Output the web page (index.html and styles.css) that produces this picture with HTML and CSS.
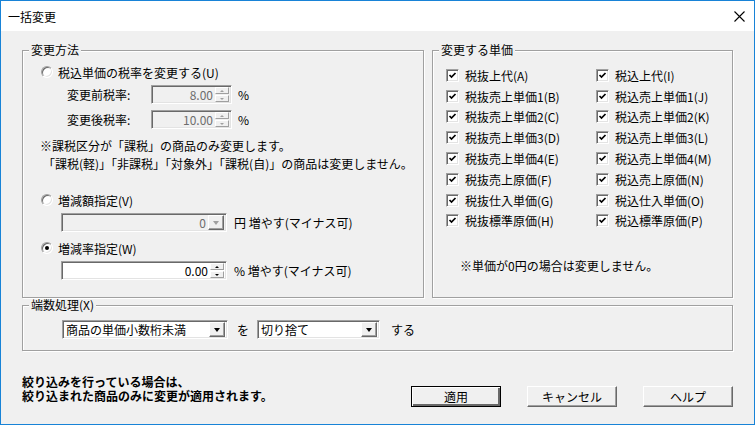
FILE: index.html
```html
<!DOCTYPE html>
<html lang="ja">
<head>
  <meta charset="UTF-8" />
  <title>一括変更</title>
  <link rel="stylesheet" href="styles.css">
</head>
<body>
  <div class="window">
    <div class="titlebar">
      <span class="title">一括変更</span>
      <svg class="close" width="11" height="11" viewBox="0 0 11 11">
        <path d="M0.5 0.5 L10.5 10.5 M10.5 0.5 L0.5 10.5" stroke="#000" stroke-width="1.1" fill="none"/>
      </svg>
    </div>

    <div class="client">
      <div class="top">
        <fieldset class="group method">
          <legend>変更方法</legend>
          <div class="gbody">
            <div class="opt first"><span class="radio"></span>税込単価の税率を変更する(U)</div>
            <div class="rate-row">
              <span class="rate-label">変更前税率:</span>
              <span class="spin off"><span class="val">8.00</span><span class="spin-btns"><span class="up"></span><span class="down"></span></span></span>
              <span class="unit">%</span>
            </div>
            <div class="rate-row second">
              <span class="rate-label">変更後税率:</span>
              <span class="spin off"><span class="val">10.00</span><span class="spin-btns"><span class="up"></span><span class="down"></span></span></span>
              <span class="unit">%</span>
            </div>
            <div class="note">
              <div>※課税区分が「課税」の商品のみ変更します。</div>
              <div class="indent">「課税(軽)」「非課税」「対象外」「課税(自)」の商品は変更しません。</div>
            </div>
            <div class="opt gap-big"><span class="radio"></span>増減額指定(V)</div>
            <div class="field-row">
              <span class="combo off wide"><span class="val right">0</span><span class="drop"><i></i></span></span>
              <span class="suffix">円 増やす(マイナス可)</span>
            </div>
            <div class="opt second"><span class="radio on"></span>増減率指定(W)</div>
            <div class="field-row">
              <span class="spin wide"><span class="val">0.00</span><span class="spin-btns"><span class="up"></span><span class="down"></span></span></span>
              <span class="suffix">% 増やす(マイナス可)</span>
            </div>
          </div>
        </fieldset>

        <fieldset class="group prices">
          <legend>変更する単価</legend>
          <div class="gbody">
            <div class="checks">
              <label class="chk"><span class="box"></span>税抜上代(A)</label>
              <label class="chk"><span class="box"></span>税込上代(I)</label>
              <label class="chk"><span class="box"></span>税抜売上単価1(B)</label>
              <label class="chk"><span class="box"></span>税込売上単価1(J)</label>
              <label class="chk"><span class="box"></span>税抜売上単価2(C)</label>
              <label class="chk"><span class="box"></span>税込売上単価2(K)</label>
              <label class="chk"><span class="box"></span>税抜売上単価3(D)</label>
              <label class="chk"><span class="box"></span>税込売上単価3(L)</label>
              <label class="chk"><span class="box"></span>税抜売上単価4(E)</label>
              <label class="chk"><span class="box"></span>税込売上単価4(M)</label>
              <label class="chk"><span class="box"></span>税抜売上原価(F)</label>
              <label class="chk"><span class="box"></span>税込売上原価(N)</label>
              <label class="chk"><span class="box"></span>税抜仕入単価(G)</label>
              <label class="chk"><span class="box"></span>税込仕入単価(O)</label>
              <label class="chk"><span class="box"></span>税抜標準原価(H)</label>
              <label class="chk"><span class="box"></span>税込標準原価(P)</label>
            </div>
            <div class="price-note">※単価が0円の場合は変更しません。</div>
          </div>
        </fieldset>
      </div>

      <fieldset class="group rounding">
        <legend>端数処理(X)</legend>
        <div class="round-row">
          <span class="combo c1"><span class="val">商品の単価小数桁未満</span><span class="drop"><i></i></span></span>
          <span class="word wo">を</span>
          <span class="combo c2"><span class="val">切り捨て</span><span class="drop"><i></i></span></span>
          <span class="word suru">する</span>
        </div>
      </fieldset>

      <div class="bottom">
        <p class="warn">絞り込みを行っている場合は、<br>絞り込まれた商品のみに変更が適用されます。</p>
        <div class="buttons">
          <button class="btn default">適用</button>
          <button class="btn">キャンセル</button>
          <button class="btn">ヘルプ</button>
        </div>
      </div>
    </div>
  </div>
</body>
</html>
```

FILE: styles.css
```css
* { box-sizing: border-box; }

body {
  margin: 0;
  font-family: "Noto Sans CJK JP", "Noto Sans", sans-serif;
  font-size: 12px;
  color: #000;
}

.window {
  width: 755px;
  height: 425px;
  border: 1px solid #1883d7;
  background: #f0f0f0;
  display: flex;
  flex-direction: column;
}

.titlebar {
  height: 30px;
  flex-shrink: 0;
  background: #fff;
  display: flex;
  align-items: center;
  justify-content: space-between;
  padding: 0 9px 0 7px;
}
.title { font-size: 12px; }

.client {
  flex: 1;
  padding: 12px 21px 0 21px;
}

.top { display: flex; gap: 8px; }

/* group boxes */
fieldset.group {
  margin: 0;
  padding: 0;
  min-width: 0;
  border: 1px solid #a0a0a0;
  box-shadow: inset 1px 1px 0 #fff, 1px 1px 0 #fff;
}
fieldset.group legend {
  margin-left: 6px;
  padding: 0 2px;
  height: 14px;
  line-height: 14px;
  background: #f0f0f0;
}

.method { width: 402px; height: 255px; }
.prices { width: 301px; height: 255px; }
.method .gbody { padding-left: 18px; }
.prices .gbody { padding-left: 13px; }

/* radio rows */
.opt {
  height: 20px;
  display: flex;
  align-items: center;
}
.opt.first { margin-top: 5px; }
.opt.second { margin-top: 6px; }
.opt.gap-big { margin-top: 17px; }

.radio {
  width: 12px;
  height: 12px;
  border-radius: 50%;
  background: #fff;
  border: 1px solid;
  border-color: #a0a0a0 #fff #fff #a0a0a0;
  box-shadow: inset 1px 1px 0 #696969, inset -1px -1px 0 #e3e3e3;
  margin-right: 5px;
  display: flex;
  align-items: center;
  justify-content: center;
}
.radio.on::after {
  content: "";
  width: 4px;
  height: 4px;
  border-radius: 50%;
  background: #000;
}

/* sunken edit boxes */
.spin, .combo {
  height: 19px;
  display: flex;
  align-items: center;
  background: #fff;
  border: 1px solid;
  border-color: #a0a0a0 #fff #fff #a0a0a0;
  box-shadow: inset 1px 1px 0 #696969, inset -1px -1px 0 #e3e3e3;
  padding: 2px 2px 2px 3px;
}
.spin.off, .combo.off { background: #f0f0f0; color: #6d6d6d; }

.val { flex: 1; line-height: 14px; white-space: nowrap; }
.spin .val, .val.right { text-align: right; padding-right: 2px; }

.spin-btns {
  width: 14px;
  height: 15px;
  display: flex;
  flex-direction: column;
  gap: 1px;
}
.spin-btns span {
  flex: 1;
  background: #f0f0f0;
  border: 1px solid;
  border-color: #fff #a0a0a0 #a0a0a0 #fff;
  display: flex;
  align-items: center;
  justify-content: center;
}
.spin-btns .up::after, .spin-btns .down::after {
  content: "";
  border-left: 2px solid transparent;
  border-right: 2px solid transparent;
}
.spin-btns .up::after { border-bottom: 2px solid #000; }
.spin-btns .down::after { border-top: 2px solid #000; }
.spin.off .spin-btns .up::after { border-bottom-color: #a0a0a0; }
.spin.off .spin-btns .down::after { border-top-color: #a0a0a0; }

.drop {
  width: 16px;
  height: 15px;
  background: #f0f0f0;
  border: 1px solid;
  border-color: #fff #696969 #696969 #fff;
  box-shadow: inset -1px -1px 0 #a0a0a0;
  display: flex;
  align-items: center;
  justify-content: center;
}
.drop i {
  border-left: 3.5px solid transparent;
  border-right: 3.5px solid transparent;
  border-top: 4px solid #000;
}
.combo.off .drop i { border-top-color: #a0a0a0; }

.rate-row {
  height: 19px;
  margin-top: 3px;
  display: flex;
  align-items: center;
}
.rate-row.second { margin-top: 6px; }
.rate-label { width: 84px; margin-left: 26px; }
.rate-row .spin { width: 81px; }
.unit { margin-left: 6px; }

.note {
  margin-top: 8px;
  margin-left: -1px;
  line-height: 18px;
}
.note .indent { padding-left: 3px; }

.field-row {
  height: 19px;
  margin-top: 3px;
  margin-left: 20px;
  display: flex;
  align-items: center;
}
.spin.wide, .combo.wide { width: 166px; }
.suffix { margin-left: 7px; }

/* check list */
.checks {
  margin-top: 8px;
  display: grid;
  grid-template-columns: 150px 130px;
  grid-auto-rows: 20.8px;
}
.chk { display: flex; align-items: center; }
.box {
  width: 13px;
  height: 13px;
  margin-right: 6px;
  background: #fff url("data:image/svg+xml,%3Csvg xmlns='http://www.w3.org/2000/svg' width='9' height='9'%3E%3Cpath d='M1.5 4 L3.5 6 L7.5 2' stroke='%23000' stroke-width='1.7' fill='none'/%3E%3C/svg%3E") center / 9px 9px no-repeat;
  border: 1px solid;
  border-color: #a0a0a0 #fff #fff #a0a0a0;
  box-shadow: inset 1px 1px 0 #696969, inset -1px -1px 0 #e3e3e3;
}
.price-note {
  margin-top: 26px;
  margin-left: 14px;
  line-height: 18px;
}

/* rounding */
.rounding {
  margin-top: 8px;
  height: 53px;
}
.round-row {
  margin-top: 8px;
  padding-left: 39px;
  display: flex;
  align-items: center;
}
.combo.c1 { width: 166px; }
.combo.c2 { width: 123px; }
.word.wo { margin: 0 8px 0 9px; }
.word.suru { margin-left: 11px; }

/* bottom */
.bottom {
  margin-top: 24px;
  display: flex;
  justify-content: space-between;
}
.warn {
  margin: 0;
  font-weight: bold;
  line-height: 14px;
}
.buttons {
  display: flex;
  gap: 26px;
  margin-top: 11px;
}
.btn {
  width: 90px;
  height: 21px;
  padding: 0;
  font: inherit;
  background: #f0f0f0;
  border: 1px solid;
  border-color: #fff #696969 #696969 #fff;
  box-shadow: inset -1px -1px 0 #a0a0a0;
}
.btn.default {
  border: 1px solid #000;
  box-shadow: inset 1px 1px 0 #fff, inset -2px -2px 0 #696969;
}
```
